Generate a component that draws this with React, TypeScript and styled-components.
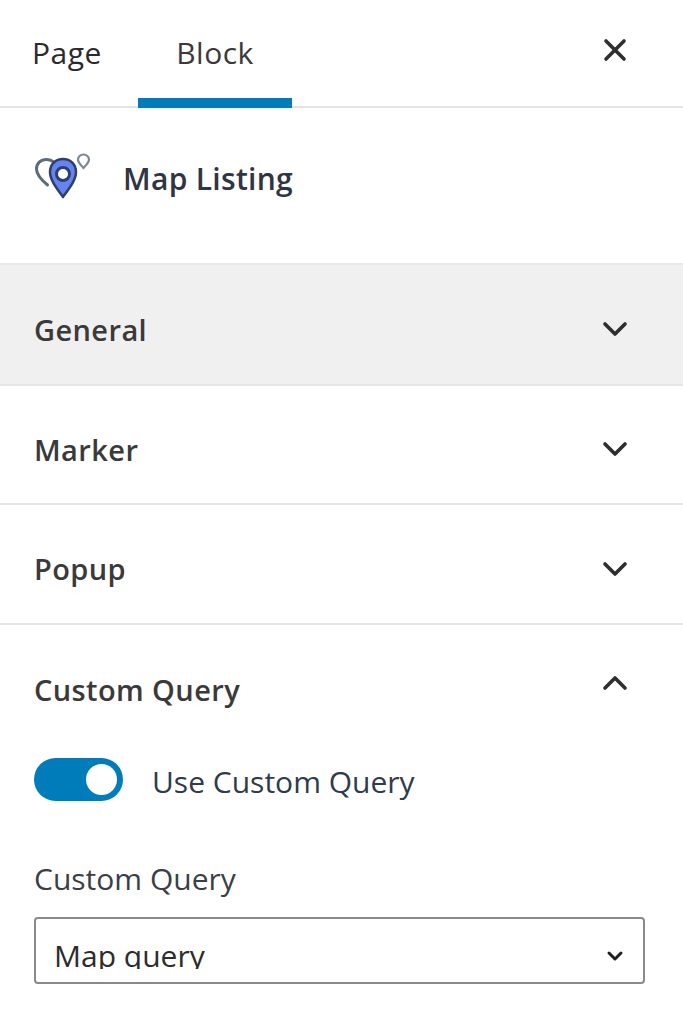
import React from 'react'
import styled, { createGlobalStyle } from 'styled-components'
import { ChevronDown, ChevronUp, X } from 'lucide-react'

const GlobalStyle = createGlobalStyle`
  html, body {
    margin: 0;
    padding: 0;
    background: #fff;
  }

  body {
    font-family: "Open Sans", "Noto Sans", "Liberation Sans", sans-serif;
    color: #2f2f2f;
    overflow: hidden;
  }
`

const Panel = styled.div`
  width: 683px;
  height: 1024px;
  overflow: hidden;
`

const Tabs = styled.div`
  display: flex;
  align-items: stretch;
  height: 106px;
  padding: 0 50px 0 0;
  border-bottom: 2px solid #e3e3e3;
`

const Tab = styled.div<{ $active?: boolean; $width: number; $inset?: number }>`
  position: relative;
  display: flex;
  justify-content: center;
  box-sizing: border-box;
  width: ${props => props.$width}px;
  padding-top: 33px;
  padding-right: ${props => props.$inset || 0}px;
  font-size: 30px;
  line-height: 40px;
  font-weight: 500;
  letter-spacing: 0.5px;
  color: ${props => (props.$active ? '#3a3a3a' : '#2b2b2b')};

  ${props =>
    props.$active &&
    `
    &::after {
      content: '';
      position: absolute;
      left: 0;
      right: 0;
      bottom: -2px;
      height: 10px;
      background: #007cba;
    }
  `}
`

const Close = styled.div`
  display: flex;
  align-items: center;
  margin-left: auto;
  padding-bottom: 7px;
  color: #2f2f2f;
`

const BlockCard = styled.div`
  display: flex;
  align-items: center;
  gap: 31px;
  height: 157px;
  padding: 0 34px 16px;
  box-sizing: border-box;
  border-bottom: 2px solid #e9e9e9;
`

const BlockName = styled.div`
  font-size: 30px;
  font-weight: 600;
  letter-spacing: 0.3px;
  color: #2f3542;
  margin-top: 2px;
`

const Section = styled.div<{ $height: number; $shaded?: boolean }>`
  height: ${props => props.$height}px;
  box-sizing: border-box;
  background: ${props => (props.$shaded ? '#f0f0f0' : '#fff')};
  border-bottom: 2px solid #e6e6e6;
  display: flex;
  align-items: center;
  justify-content: space-between;
  padding: 9px 48px 0 34px;
`

const SectionTitle = styled.div`
  font-size: 29px;
  font-weight: 600;
  letter-spacing: 0.4px;
  color: #3a3a3a;
`

const Chevron = styled.div<{ $lift?: number }>`
  display: flex;
  color: #2f2f2f;
  margin-top: ${props => -(props.$lift || 0)}px;
`

const OpenSection = styled.div`
  padding: 0 34px;
`

const OpenHeader = styled.div`
  display: flex;
  align-items: center;
  justify-content: space-between;
  height: 128px;
  padding-right: 14px;
`

const ToggleRow = styled.div`
  display: flex;
  align-items: center;
  gap: 29px;
  height: 44px;
  margin-top: 4px;
`

const Toggle = styled.div`
  position: relative;
  width: 89px;
  height: 43px;
  border-radius: 22px;
  background: #007cba;

  &::after {
    content: '';
    position: absolute;
    top: 6px;
    right: 6px;
    width: 31px;
    height: 31px;
    border-radius: 50%;
    background: #fff;
  }
`

const ToggleLabel = styled.div`
  padding-top: 4px;
  font-size: 30px;
  color: #2f3b4c;
`

const FieldLabel = styled.div`
  margin-top: 58px;
  font-size: 30px;
  line-height: 40px;
  color: #3a3f47;
`

const Select = styled.div`
  display: flex;
  align-items: flex-start;
  justify-content: space-between;
  box-sizing: border-box;
  width: 611px;
  height: 67px;
  margin-top: 18px;
  padding: 15px 16px 0 18px;
  border: 2px solid #8a8a8a;
  border-radius: 4px;
  background: #fff;
  overflow: hidden;
`

const SelectValue = styled.div`
  height: 35px;
  overflow: hidden;
  font-size: 30px;
  line-height: 44px;
  color: #2c2c2c;
`

const SelectCaret = styled.div`
  display: flex;
  padding-top: 10px;
  color: #1e1e1e;
`

const MapListingIcon = () => (
  <svg width="58" height="50" viewBox="0 0 58 50" fill="none">
    <path
      d="M19 8.500C17 7.200 15 6.500 12.500 6.500 6.500 6.500 2.500 10.500 2.500 16c0 5.500 5 11 11 16"
      stroke="#5d6b7a"
      strokeWidth="3"
      strokeLinecap="round"
    />
    <path
      d="M29 6c-7.500 0-13 5.500-13 13 0 8 6.500 16 13 25 6.500-9 13-17 13-25 0-7.500-5.500-13-13-13z"
      fill="#6484f5"
      stroke="#2f3f66"
      strokeWidth="2.500"
      strokeLinejoin="round"
    />
    <circle cx="29" cy="21" r="6.500" fill="#fff" stroke="#2f3f66" strokeWidth="3" />
    <path
      d="M49.500 1.500c-3 0-5.500 2.200-5.500 5 0 3 3.200 6 5.500 8.500 2.300-2.500 5.500-5.500 5.500-8.500 0-2.800-2.500-5-5.500-5z"
      fill="#fff"
      stroke="#7d8894"
      strokeWidth="2.200"
    />
  </svg>
)

const sections = [
  { title: 'General', height: 121, shaded: true },
  { title: 'Marker', height: 119 },
  { title: 'Popup', height: 120 },
]

export default function App() {
  return (
    <Panel>
      <GlobalStyle />
      <Tabs>
        <Tab $width={138} $inset={4}>
          Page
        </Tab>
        <Tab $width={154} $active>
          Block
        </Tab>
        <Close>
          <X size={36} strokeWidth={2.4} />
        </Close>
      </Tabs>
      <BlockCard>
        <MapListingIcon />
        <BlockName>Map Listing</BlockName>
      </BlockCard>
      {sections.map(section => (
        <Section key={section.title} $height={section.height} $shaded={section.shaded}>
          <SectionTitle>{section.title}</SectionTitle>
          <Chevron>
            <ChevronDown size={40} strokeWidth={2.2} />
          </Chevron>
        </Section>
      ))}
      <OpenSection>
        <OpenHeader>
          <SectionTitle>Custom Query</SectionTitle>
          <Chevron $lift={12}>
            <ChevronUp size={40} strokeWidth={2.2} />
          </Chevron>
        </OpenHeader>
        <ToggleRow>
          <Toggle />
          <ToggleLabel>Use Custom Query</ToggleLabel>
        </ToggleRow>
        <FieldLabel>Custom Query</FieldLabel>
        <Select>
          <SelectValue>Map query</SelectValue>
          <SelectCaret>
            <ChevronDown size={24} strokeWidth={3} />
          </SelectCaret>
        </Select>
      </OpenSection>
    </Panel>
  )
}
